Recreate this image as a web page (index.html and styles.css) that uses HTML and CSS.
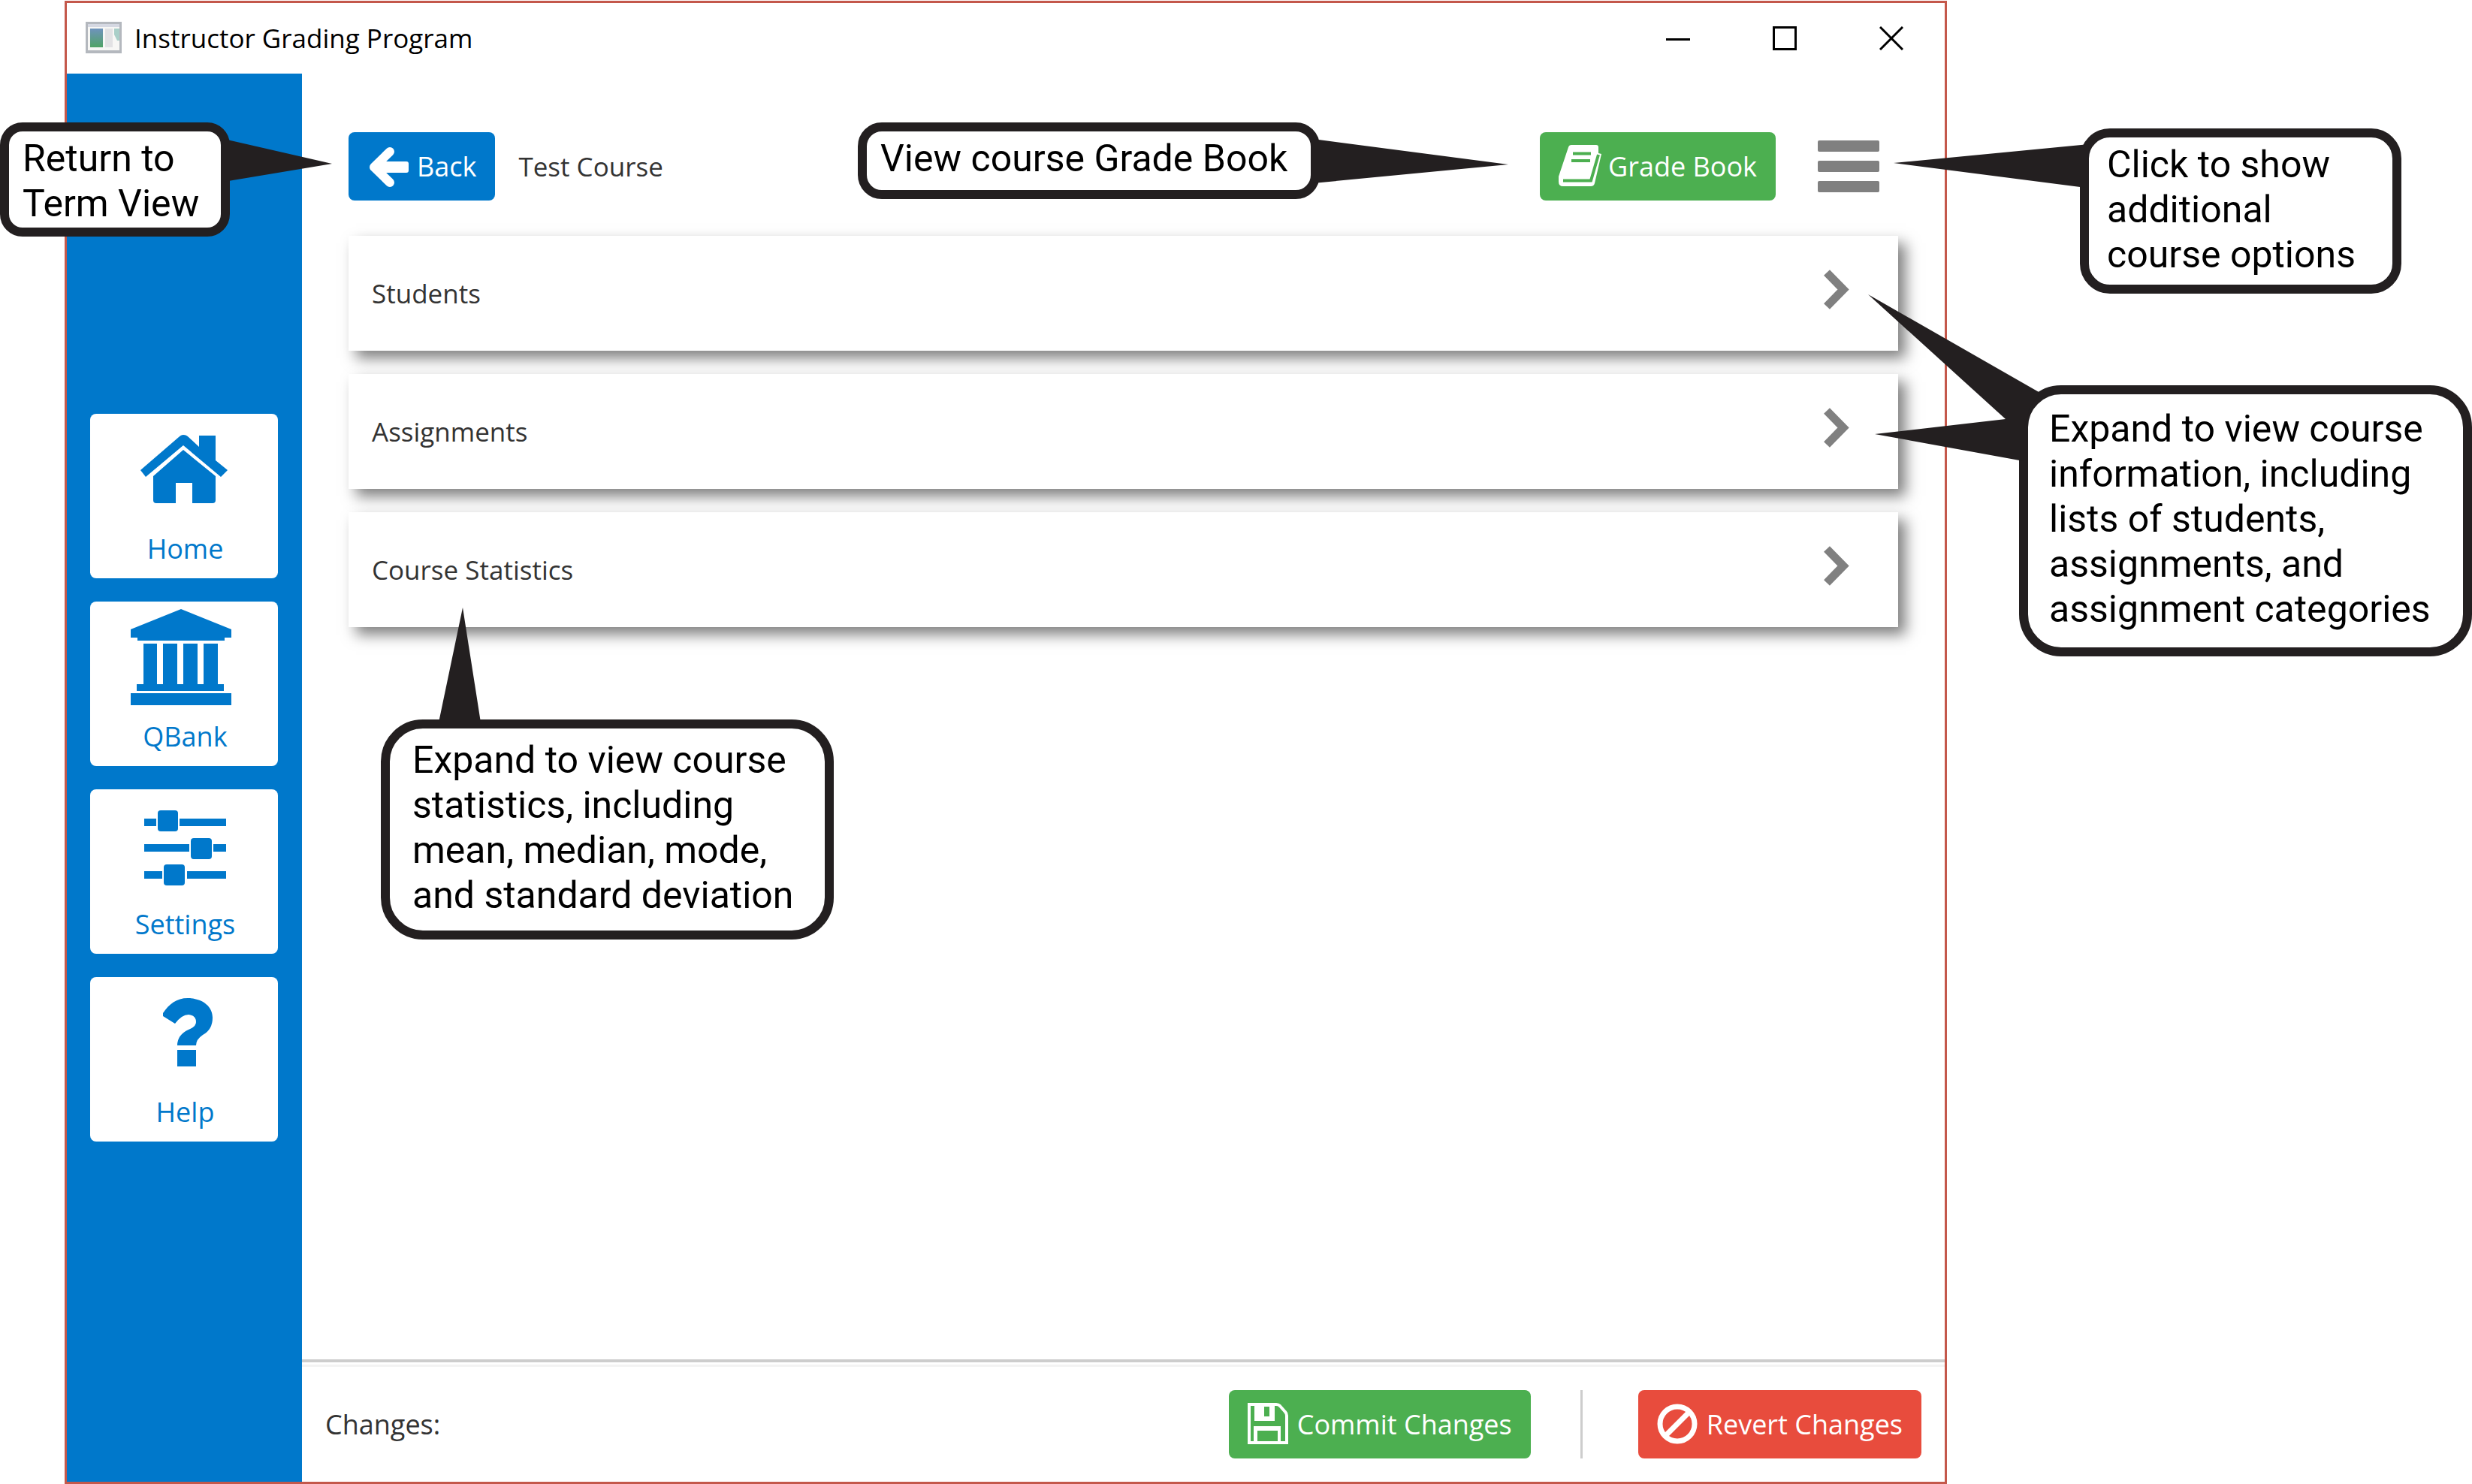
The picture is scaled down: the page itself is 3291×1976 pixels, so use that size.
FILE: index.html
```html
<!DOCTYPE html>
<html lang="en">
<head>
<meta charset="utf-8">
<title>Instructor Grading Program</title>
<link rel="stylesheet" href="styles.css">
</head>
<body>
<div class="stage">
  <div class="window">
    <header class="titlebar">
      <svg class="app-icon" viewBox="0 0 48 44" aria-hidden="true">
        <rect x="0" y="0" width="48" height="42" fill="#b4b8be"/>
        <rect x="3" y="3" width="42" height="4" fill="#d5d8e2"/>
        <rect x="3" y="7" width="42" height="31" fill="#f7f7f5"/>
        <defs><linearGradient id="pane" x1="0" y1="0" x2="0" y2="1"><stop offset="0" stop-color="#6f93bd"/><stop offset="1" stop-color="#4fa365"/></linearGradient></defs>
        <rect x="6" y="9" width="17" height="25" fill="url(#pane)"/>
        <rect x="26" y="9" width="10" height="25" fill="#e2e2e4"/>
        <path d="M38 9h7v16h-3l-4-8z" fill="#a9cfc8"/>
      </svg>
      <span class="app-title">Instructor Grading Program</span>
      <button class="win-btn" type="button" aria-label="Minimize"><svg viewBox="0 0 32 32"><path d="M0 17.500h32" stroke="#000" stroke-width="3"/></svg></button>
      <button class="win-btn" type="button" aria-label="Maximize"><svg viewBox="0 0 32 32"><path d="M1.500 1.500h29v29h-29z" fill="none" stroke="#000" stroke-width="3"/></svg></button>
      <button class="win-btn" type="button" aria-label="Close"><svg viewBox="0 0 32 32"><path d="M1 1l30 30M31 1L1 31" stroke="#000" stroke-width="3"/></svg></button>
    </header>
    <div class="body">
      <nav class="sidebar">
        <button class="tile" type="button">
          <svg viewBox="0 0 250 156" aria-hidden="true"><path d="M124 28c3 0 5 1 7 3l14 13V29h22v33l16 13-9 9-50-42-50 42-7-9 51-44c2-2 4-3 6-3z"/><path d="M124 48l43 35v32q0 4-4 4h-27V92h-22v27H88q-4 0-4-4V83z"/></svg>
          <span>Home</span>
        </button>
        <button class="tile" type="button">
          <svg viewBox="0 0 250 156" aria-hidden="true"><path d="M121 10l67 27v11h-9v4H63v-4h-9V37zM71 56h18v54h8V56h19v54h8V56h19v54h8V56h19v54h8v9H62v-9h9zM54 122h134v16H54z"/></svg>
          <span>QBank</span>
        </button>
        <button class="tile" type="button">
          <svg viewBox="0 0 250 156" aria-hidden="true"><path d="M72 39h16v10H72zM119 39h62v10h-62zM72 73h60v10H72zM164 73h17v10h-17zM72 109h24v10H72zM129 109h52v10h-52z"/><rect x="90" y="28" width="27" height="28" rx="4"/><rect x="134" y="65" width="28" height="28" rx="4"/><rect x="98" y="100" width="28" height="28" rx="4"/></svg>
          <span>Settings</span>
        </button>
        <button class="tile" type="button">
          <svg viewBox="0 0 250 156" aria-hidden="true"><path d="M97 52l16 10q9-12 18-12 10 1 10 10 0 6-10 10-15 7-15 21h25q0-8 9-14 13-7 13-23c0-16-15-26-33-26-15 0-25 8-33 20zM116 97h25v22h-25z"/></svg>
          <span>Help</span>
        </button>
      </nav>
      <div class="pane">
        <main class="content">
          <div class="toolbar">
            <button class="btn btn-blue" type="button">
              <svg viewBox="0 0 58 58" aria-hidden="true"><path d="M30 9L9 29.500 30 50" fill="none" stroke="#fff" stroke-width="12" stroke-linecap="round" stroke-linejoin="round"/><path d="M12 22h40q3 0 3 3v9q0 3-3 3H12z" fill="#fff"/></svg>
              Back
            </button>
            <h1 class="course">Test Course</h1>
            <button class="btn btn-green" type="button">
              <svg viewBox="0 0 58 58" aria-hidden="true"><path d="M17 0h33q3 0 3 3v8l4 1-9 39q-1 4-5 4H6q-6 0-6-6v-7L13 3q1-3 4-3z" fill="#fff"/><path d="M19 11.500h24M17 21h25M6 47.500h37L53 13" fill="none" stroke="#4caf50" stroke-width="4"/></svg>
              Grade Book
            </button>
            <button class="menu" type="button" aria-label="Course options"><span></span><span></span><span></span></button>
          </div>
          <button class="card" type="button">Students<svg viewBox="0 0 36 57" aria-hidden="true"><path d="M6 6l22 22.500L6 51"/></svg></button>
          <button class="card" type="button">Assignments<svg viewBox="0 0 36 57" aria-hidden="true"><path d="M6 6l22 22.500L6 51"/></svg></button>
          <button class="card" type="button">Course Statistics<svg viewBox="0 0 36 57" aria-hidden="true"><path d="M6 6l22 22.500L6 51"/></svg></button>
        </main>
        <footer class="footer">
          <span class="changes">Changes:</span>
          <button class="btn btn-green" type="button">
            <svg viewBox="0 0 58 58" aria-hidden="true"><path d="M2 2h36q3 0 5 2l7 8q2 2 2 5v36H2z" fill="none" stroke="#fff" stroke-width="4"/><path d="M9 2h27v22H9zM22 5v13h7V5z" fill="#fff" fill-rule="evenodd"/><path d="M8 31h36v22h-4V37H13v16H8z" fill="#fff"/></svg>
            Commit Changes
          </button>
          <span class="divider"></span>
          <button class="btn btn-red" type="button">
            <svg viewBox="0 0 58 58" aria-hidden="true"><g fill="none" stroke="#fff" stroke-width="7"><circle cx="27" cy="28" r="23"/><path d="M43 12L11 44"/></g></svg>
            Revert Changes
          </button>
        </footer>
      </div>
    </div>
  </div>

  <aside class="callout callout-return">
    <svg class="pointer" aria-hidden="true"><path d="M298 22L442 55 298 79z"/></svg>
    <p>Return to<br>Term View</p>
  </aside>
  <aside class="callout callout-book">
    <svg class="pointer" aria-hidden="true"><path d="M606 22L866 56 606 81z"/></svg>
    <p>View course Grade Book</p>
  </aside>
  <aside class="callout callout-options">
    <svg class="pointer" aria-hidden="true"><path d="M12 21L-248 46 8 79z"/></svg>
    <p>Click to show<br>additional<br>course options</p>
  </aside>
  <aside class="callout callout-expand">
    <svg class="pointer" aria-hidden="true"><path d="M28 10L-201-121-18 45-192 65 6 101V60L14 30z"/></svg>
    <p>Expand to view course<br>information, including<br>lists of students,<br>assignments, and<br>assignment categories</p>
  </aside>
  <aside class="callout callout-stats">
    <svg class="pointer" aria-hidden="true"><path d="M77 4l32-153 24 153z"/></svg>
    <p>Expand to view course<br>statistics, including<br>mean, median, mode,<br>and standard deviation</p>
  </aside>
</div>
</body>
</html>
```
FILE: styles.css
```css
* { box-sizing: border-box; }

body {
  margin: 0;
  background: #fff;
  color: #333;
  font: 36px/48px "Open Sans", "Noto Sans", sans-serif;
}

button {
  margin: 0;
  padding: 0;
  border: 0;
  background: none;
  color: inherit;
  font: inherit;
  cursor: pointer;
}

svg { display: block; flex: none; }

.stage {
  position: relative;
  display: flex;
  min-height: 100vh;
  padding: 1px 699px 0 86px;
  overflow: hidden;
}

/* Application window */
.window {
  flex: 1;
  display: flex;
  flex-direction: column;
  border: 3px solid #c4584b;
  background: #fff;
}

.titlebar {
  display: flex;
  align-items: center;
  height: 94px;
  padding-left: 25px;
}
.app-icon { width: 48px; height: 44px; }
.app-title {
  flex: 1;
  margin-left: 17px;
  color: #000;
  font-size: 35px;
}
.win-btn {
  display: flex;
  justify-content: center;
  width: 142px;
}
.win-btn svg { width: 32px; height: 32px; }

.body { flex: 1; display: flex; }

.sidebar {
  display: flex;
  flex-direction: column;
  justify-content: center;
  gap: 31px;
  width: 313px;
  padding: 0 32px 0 31px;
  background: #0078cb;
}
.tile {
  height: 219px;
  border-radius: 8px;
  background: #fff;
  color: #0078cb;
  display: flex;
  flex-direction: column;
  align-items: center;
}
.tile svg { width: 250px; height: 156px; fill: #0078cb; }
.tile span { padding-left: 3px; }

.pane { flex: 1; display: flex; flex-direction: column; }

.content {
  flex: 1;
  display: flex;
  flex-direction: column;
  gap: 31px;
  padding: 78px 62px 0 62px;
}

.toolbar {
  display: flex;
  align-items: center;
  margin-bottom: 16px;
  padding-right: 25px;
}
.course {
  flex: 1;
  margin: 0 0 0 31px;
  font-size: 35px;
  font-weight: 400;
}

.btn {
  display: flex;
  align-items: center;
  gap: 8px;
  height: 91px;
  padding: 0 25px;
  border-radius: 8px;
  color: #fff;
  white-space: nowrap;
}
.btn svg { width: 58px; height: 58px; }
.btn-blue { background: #0078cb; }
.btn-green { background: #4caf50; }
.btn-red { background: #e84c3d; }

.menu {
  display: flex;
  flex-direction: column;
  gap: 12px;
  width: 82px;
  margin-left: 56px;
}
.menu span { height: 15px; border-radius: 2px; background: #808080; }

.card {
  display: flex;
  align-items: center;
  justify-content: space-between;
  height: 153px;
  padding: 0 65px 0 31px;
  background: #fff;
  box-shadow: 10px 10px 18px rgba(0, 0, 0, 0.5);
  font-size: 35px;
}
.card svg {
  width: 36px;
  height: 57px;
  margin-bottom: 10px;
  fill: none;
  stroke: #808080;
  stroke-width: 11px;
}

.footer {
  display: flex;
  align-items: center;
  padding: 37px 31px 31px 31px;
  border-top: 4px solid #cdcdcd;
  box-shadow: inset 0 3px #fff, inset 0 6px #f3f3f3;
}
.changes { flex: 1; }
.divider {
  align-self: stretch;
  width: 3px;
  margin: 0 74px 0 66px;
  background: #cdcdcd;
}

/* Annotation bubbles over the window */
.callout {
  position: absolute;
  border: 12px solid #231f20;
  background: #fff;
  color: #000;
  font: 50px/60px Roboto, sans-serif;
  white-space: nowrap;
}
.callout p { margin: 0; }
.pointer {
  position: absolute;
  top: -12px;
  left: -12px;
  width: 1px;
  height: 1px;
  overflow: visible;
  fill: #231f20;
}
.callout-return {
  top: 163px;
  left: 0;
  width: 306px;
  height: 152px;
  padding: 6px 18px;
  border-radius: 30px;
}
.callout-book {
  top: 163px;
  right: 1534px;
  width: 615px;
  height: 102px;
  padding: 6px 18px;
  border-radius: 32px;
}
.callout-options {
  top: 171px;
  right: 94px;
  width: 428px;
  height: 220px;
  padding: 6px 24px;
  border-radius: 40px;
}
.callout-expand {
  top: 513px;
  right: 0;
  width: 603px;
  height: 361px;
  padding: 16px 28px;
  border-radius: 56px;
}
.callout-stats {
  top: 958px;
  left: 507px;
  width: 603px;
  height: 293px;
  padding: 12px 30px;
  border-radius: 56px;
}
```
